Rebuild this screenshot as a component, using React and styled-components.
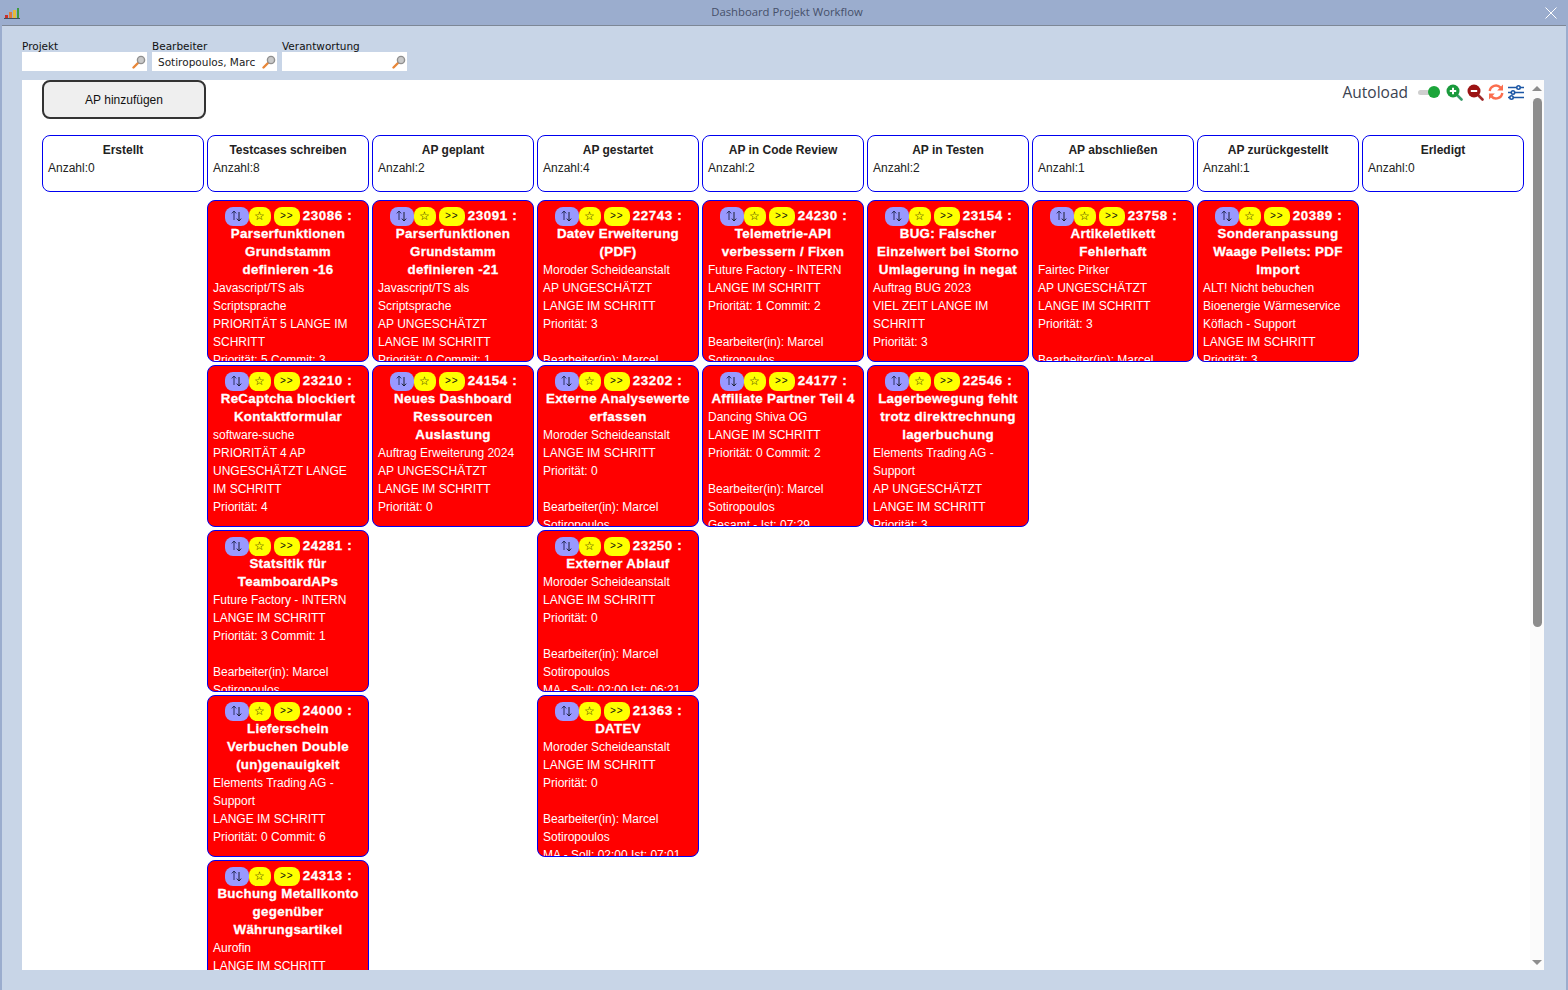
import React from "react";
import styled, { createGlobalStyle } from "styled-components";

const GlobalStyle = createGlobalStyle`
  html, body {
    margin: 0;
    padding: 0;
    overflow: hidden;
    background: #c8d5e7;
  }
`;

const Marcel = ["", "Bearbeiter(in): Marcel", "Sotiropoulos"];

const columns = [
  { title: "Erstellt", count: 0, cards: [] },
  {
    title: "Testcases schreiben",
    count: 8,
    cards: [
      { id: 23086, title: "Parserfunktionen Grundstamm definieren -16", lines: ["Javascript/TS als Scriptsprache", "PRIORITÄT 5 LANGE IM SCHRITT", "Priorität: 5 Commit: 3"] },
      { id: 23210, title: "ReCaptcha blockiert Kontaktformular", lines: ["software-suche", "PRIORITÄT 4 AP UNGESCHÄTZT LANGE IM SCHRITT", "Priorität: 4"] },
      { id: 24281, title: "Statsitik für TeamboardAPs", lines: ["Future Factory - INTERN", "LANGE IM SCHRITT", "Priorität: 3 Commit: 1", ...Marcel] },
      { id: 24000, title: "Lieferschein Verbuchen Double (un)genauigkeit", lines: ["Elements Trading AG - Support", "LANGE IM SCHRITT", "Priorität: 0 Commit: 6"] },
      { id: 24313, title: "Buchung Metallkonto gegenüber Währungsartikel", lines: ["Aurofin", "LANGE IM SCHRITT", "Priorität: 0"] },
    ],
  },
  {
    title: "AP geplant",
    count: 2,
    cards: [
      { id: 23091, title: "Parserfunktionen Grundstamm definieren -21", lines: ["Javascript/TS als Scriptsprache", "AP UNGESCHÄTZT", "LANGE IM SCHRITT", "Priorität: 0 Commit: 1"] },
      { id: 24154, title: "Neues Dashboard Ressourcen Auslastung", lines: ["Auftrag Erweiterung 2024", "AP UNGESCHÄTZT", "LANGE IM SCHRITT", "Priorität: 0"] },
    ],
  },
  {
    title: "AP gestartet",
    count: 4,
    cards: [
      { id: 22743, title: "Datev Erweiterung (PDF)", lines: ["Moroder Scheideanstalt", "AP UNGESCHÄTZT", "LANGE IM SCHRITT", "Priorität: 3", ...Marcel] },
      { id: 23202, title: "Externe Analysewerte erfassen", lines: ["Moroder Scheideanstalt", "LANGE IM SCHRITT", "Priorität: 0", ...Marcel] },
      { id: 23250, title: "Externer Ablauf", lines: ["Moroder Scheideanstalt", "LANGE IM SCHRITT", "Priorität: 0", ...Marcel, "MA - Soll: 02:00 Ist: 06:21"] },
      { id: 21363, title: "DATEV", lines: ["Moroder Scheideanstalt", "LANGE IM SCHRITT", "Priorität: 0", ...Marcel, "MA - Soll: 02:00 Ist: 07:01"] },
    ],
  },
  {
    title: "AP in Code Review",
    count: 2,
    cards: [
      { id: 24230, title: "Telemetrie-API verbessern / Fixen", lines: ["Future Factory - INTERN", "LANGE IM SCHRITT", "Priorität: 1 Commit: 2", ...Marcel] },
      { id: 24177, title: "Affiliate Partner Teil 4", lines: ["Dancing Shiva OG", "LANGE IM SCHRITT", "Priorität: 0 Commit: 2", ...Marcel, "Gesamt - Ist: 07:29"] },
    ],
  },
  {
    title: "AP in Testen",
    count: 2,
    cards: [
      { id: 23154, title: "BUG: Falscher Einzelwert bei Storno Umlagerung in negat", lines: ["Auftrag BUG 2023", "VIEL ZEIT LANGE IM SCHRITT", "Priorität: 3"] },
      { id: 22546, title: "Lagerbewegung fehlt trotz direktrechnung lagerbuchung", lines: ["Elements Trading AG - Support", "AP UNGESCHÄTZT", "LANGE IM SCHRITT", "Priorität: 3"] },
    ],
  },
  {
    title: "AP abschließen",
    count: 1,
    cards: [
      { id: 23758, title: "Artikeletikett Fehlerhaft", lines: ["Fairtec Pirker", "AP UNGESCHÄTZT", "LANGE IM SCHRITT", "Priorität: 3", ...Marcel] },
    ],
  },
  {
    title: "AP zurückgestellt",
    count: 1,
    cards: [
      { id: 20389, title: "Sonderanpassung Waage Pellets: PDF Import", lines: ["ALT! Nicht bebuchen", "Bioenergie Wärmeservice Köflach - Support", "LANGE IM SCHRITT", "Priorität: 3"] },
    ],
  },
  { title: "Erledigt", count: 0, cards: [] },
];

const filters = [
  { label: "Projekt", value: "" },
  { label: "Bearbeiter", value: "Sotiropoulos, Marc" },
  { label: "Verantwortung", value: "" },
];

const AppLogo = () => (
  <svg width="16" height="12" viewBox="0 0 16 12">
    <rect x="1" y="8" width="3" height="3" fill="#c9302c" />
    <rect x="5" y="5" width="3" height="6" fill="#e07b39" />
    <rect x="9" y="3" width="3" height="8" fill="#e6b93a" />
    <rect x="13" y="1" width="2" height="10" fill="#3e9b3e" />
    <rect x="0" y="11" width="16" height="1" fill="#44505c" />
  </svg>
);

const CloseIcon = () => (
  <svg width="12" height="12" viewBox="0 0 12 12">
    <path d="M0.5 0.5 L11.5 11.5 M11.5 0.5 L0.5 11.5" stroke="#fff" strokeWidth="1" fill="none" />
  </svg>
);

const SearchIcon = () => (
  <svg width="14" height="14" viewBox="0 0 14 14">
    <path d="M1.5 12.5 L6 8" stroke="#e8873a" strokeWidth="2.4" strokeLinecap="round" />
    <circle cx="9" cy="5" r="3.6" fill="#c9c9c9" stroke="#8f8f8f" strokeWidth="1.4" />
  </svg>
);

const ZoomIcon = ({ color, handle, plus }) => (
  <svg width="17" height="17" viewBox="0 0 17 17">
    <path d="M10.5 10.5 L15.5 15.5" stroke={handle} strokeWidth="2.6" strokeLinecap="round" />
    <circle cx="7" cy="7" r="6.5" fill={color} />
    <path d={plus ? "M3.8 7 H10.2 M7 3.8 V10.2" : "M3.8 7 H10.2"} stroke="#fff" strokeWidth="2" />
  </svg>
);

const RefreshIcon = () => (
  <svg width="16" height="16" viewBox="0 0 16 16">
    <path d="M1.7 7 A6.3 6.3 0 0 1 12.6 3.6" stroke="#fb6e4e" strokeWidth="2.4" fill="none" />
    <path d="M15 0.6 V6.4 H9.2 Z" fill="#fb6e4e" />
    <path d="M14.3 9 A6.3 6.3 0 0 1 3.4 12.4" stroke="#fb6e4e" strokeWidth="2.4" fill="none" />
    <path d="M1 15.4 V9.6 H6.8 Z" fill="#fb6e4e" />
  </svg>
);

const SlidersIcon = () => (
  <svg width="16" height="15" viewBox="0 0 16 15">
    <g stroke="#1c57a5" strokeWidth="1.6" fill="#fff">
      <path d="M0 2.5 H16 M0 7.5 H16 M0 12.5 H16" />
      <circle cx="10.5" cy="2.5" r="1.7" />
      <circle cx="5" cy="7.5" r="1.7" />
      <circle cx="3.5" cy="12.5" r="1.7" />
    </g>
  </svg>
);

const MoveIcon = () => (
  <svg width="11" height="12" viewBox="0 0 11 12">
    <path d="M3 10 V1 M0.8 3.4 L3 1 L5.2 3.4" stroke="#2a3060" strokeWidth="1" fill="none" />
    <path d="M8 2 V11 M5.8 8.6 L8 11 L10.2 8.6" stroke="#1c2030" strokeWidth="1" fill="none" />
  </svg>
);

const App = () => {
  return (
    <Window>
      <GlobalStyle />
      <TitleBar>
        <AppLogo />
        <WindowTitle>Dashboard Projekt Workflow</WindowTitle>
        <CloseIcon />
      </TitleBar>
      <FilterBar>
        {filters.map((filter) => (
          <Filter key={filter.label}>
            <FilterLabel>{filter.label}</FilterLabel>
            <FilterInput>
              <FilterValue>{filter.value}</FilterValue>
              <SearchIcon />
            </FilterInput>
          </Filter>
        ))}
      </FilterBar>
      <Panel>
        <Main>
          <TopRow>
            <AddButton>AP hinzufügen</AddButton>
            <Tools>
              <AutoloadLabel>Autoload</AutoloadLabel>
              <Toggle>
                <ToggleKnob />
              </Toggle>
              <ToolIcons>
                <ZoomIcon color="#1a9a3c" handle="#3a9a6a" plus />
                <ZoomIcon color="#9c1414" handle="#a02a2a" />
                <RefreshIcon />
                <SlidersIcon />
              </ToolIcons>
            </Tools>
          </TopRow>
          <Board>
            {columns.map((column) => (
              <Column key={column.title}>
                <ColumnHeader>
                  <ColumnTitle>{column.title}</ColumnTitle>
                  <ColumnCount>Anzahl:{column.count}</ColumnCount>
                </ColumnHeader>
                <CardList>
                  {column.cards.map((card) => (
                    <Card key={card.id}>
                      <CardHead>
                        <MoveButton>
                          <MoveIcon />
                        </MoveButton>
                        <StarButton>☆</StarButton>
                        <NextButton>&gt;&gt;</NextButton>
                        <CardId>{card.id} :</CardId>
                      </CardHead>
                      <CardTitle>{card.title}</CardTitle>
                      {card.lines.map((line, i) => (
                        <CardLine key={i}>{line || "\u00a0"}</CardLine>
                      ))}
                    </Card>
                  ))}
                </CardList>
              </Column>
            ))}
          </Board>
        </Main>
        <Scrollbar>
          <ArrowUp />
          <Thumb />
          <ArrowDown />
        </Scrollbar>
      </Panel>
    </Window>
  );
};

export default App;

const Window = styled.div`
  width: 1568px;
  height: 990px;
  box-sizing: border-box;
  display: flex;
  flex-direction: column;
  overflow: hidden;
  background: #c8d5e7;
  border-left: 2px solid #9badce;
  border-right: 2px solid #9badce;
  font-family: "Liberation Sans", Arial, sans-serif;
`;

const TitleBar = styled.div`
  height: 25px;
  flex: none;
  box-sizing: content-box;
  display: flex;
  align-items: center;
  justify-content: space-between;
  padding: 0 9px 0 2px;
  background: #9badce;
  border-bottom: 1px solid #7d8796;
`;

const WindowTitle = styled.div`
  font-family: "Open Sans", sans-serif;
  font-size: 11.3px;
  color: #46506a;
  margin: -2px 0 0 9px;
`;

const FilterBar = styled.div`
  height: 54px;
  flex: none;
  box-sizing: border-box;
  display: flex;
  gap: 5px;
  padding: 14px 0 0 20px;
`;

const Filter = styled.div`
  width: 125px;
  display: flex;
  flex-direction: column;
`;

const FilterLabel = styled.div`
  height: 12px;
  font-family: "DejaVu Sans", sans-serif;
  font-size: 10.5px;
  line-height: 13px;
  color: #111;
`;

const FilterInput = styled.div`
  height: 19px;
  display: flex;
  align-items: center;
  justify-content: space-between;
  padding: 0 1px 0 6px;
  background: #fff;
`;

const FilterValue = styled.span`
  font-family: "DejaVu Sans", sans-serif;
  font-size: 10.5px;
  color: #222;
  white-space: nowrap;
`;

const Panel = styled.div`
  height: 890px;
  flex: none;
  margin: 0 22px 0 20px;
  display: flex;
  background: #fff;
  overflow: hidden;
`;

const Main = styled.div`
  flex: 1;
  min-width: 0;
  padding: 0 6px 0 20px;
`;

const TopRow = styled.div`
  height: 55px;
  display: flex;
  align-items: flex-start;
  justify-content: space-between;
`;

const AddButton = styled.button`
  width: 164px;
  height: 39px;
  background: #efefef;
  border: 2px solid #333;
  border-radius: 8px;
  font-family: "Liberation Sans", Arial, sans-serif;
  font-size: 12px;
  color: #111;
`;

const Tools = styled.div`
  height: 24px;
  display: flex;
  align-items: center;
`;

const AutoloadLabel = styled.span`
  font-family: "Open Sans", sans-serif;
  font-size: 15.5px;
  color: #3a4250;
  margin-right: 10px;
`;

const Toggle = styled.div`
  position: relative;
  width: 22px;
  height: 5px;
  background: #cfcfcf;
  border-radius: 3px;
  margin-right: 6px;
`;

const ToggleKnob = styled.div`
  position: absolute;
  right: 0;
  top: -3.5px;
  width: 12px;
  height: 12px;
  border-radius: 50%;
  background: #1ca53a;
`;

const ToolIcons = styled.div`
  display: flex;
  align-items: center;
  gap: 4px;
`;

const Board = styled.div`
  display: grid;
  grid-template-columns: repeat(9, 162px);
  gap: 3px;
`;

const Column = styled.div`
  display: flex;
  flex-direction: column;
  gap: 8px;
`;

const ColumnHeader = styled.div`
  height: 57px;
  box-sizing: border-box;
  border: 1px solid #0000f0;
  border-radius: 8px;
  padding: 5px;
  background: #fff;
`;

const ColumnTitle = styled.div`
  font-size: 12px;
  font-weight: bold;
  line-height: 18px;
  text-align: center;
  color: #222;
`;

const ColumnCount = styled.div`
  font-size: 12px;
  line-height: 18px;
  color: #222;
`;

const CardList = styled.div`
  display: flex;
  flex-direction: column;
  gap: 3px;
`;

const Card = styled.div`
  height: 162px;
  box-sizing: border-box;
  overflow: hidden;
  padding: 6px 5px 5px;
  background: #ff0000;
  border: 1px solid #0000f0;
  border-radius: 8px;
  color: #fff;
  font-size: 12px;
  line-height: 18px;
`;

const CardHead = styled.div`
  height: 18px;
  display: flex;
  align-items: center;
  justify-content: center;
  padding-left: 1px;
`;

const HeadButton = styled.span`
  height: 19px;
  display: flex;
  flex: none;
  align-items: center;
  justify-content: center;
  border-radius: 8px;
  font-size: 11px;
  color: #111;
`;

const MoveButton = styled(HeadButton)`
  width: 24px;
  background: #9999ff;
`;

const StarButton = styled(HeadButton)`
  width: 22px;
  background: #ffff00;
  font-size: 12px;
  color: #222200;
`;

const NextButton = styled(HeadButton)`
  width: 26px;
  margin: 0 3px;
  background: #ffff00;
  font-size: 10px;
  letter-spacing: 1px;
`;

const CardId = styled.span`
  font-size: 13.33px;
  font-weight: bold;
  letter-spacing: 0.6px;
  -webkit-text-stroke: 0.3px #fff;
  white-space: nowrap;
`;

const CardTitle = styled.div`
  font-size: 13.33px;
  font-weight: bold;
  letter-spacing: 0.3px;
  -webkit-text-stroke: 0.3px #fff;
  text-align: center;
`;

const CardLine = styled.div``;

const Scrollbar = styled.div`
  width: 14px;
  flex: none;
  display: flex;
  flex-direction: column;
  align-items: center;
  background: #fbfbfb;
`;

const ArrowUp = styled.div`
  width: 0;
  height: 0;
  margin-top: 6px;
  border-left: 5px solid transparent;
  border-right: 5px solid transparent;
  border-bottom: 5px solid #8c8c8c;
`;

const Thumb = styled.div`
  width: 9px;
  height: 529px;
  margin-top: 7px;
  background: #8c8c8c;
  border-radius: 5px;
`;

const ArrowDown = styled.div`
  width: 0;
  height: 0;
  margin-top: auto;
  margin-bottom: 5px;
  border-left: 5px solid transparent;
  border-right: 5px solid transparent;
  border-top: 5px solid #8c8c8c;
`;
